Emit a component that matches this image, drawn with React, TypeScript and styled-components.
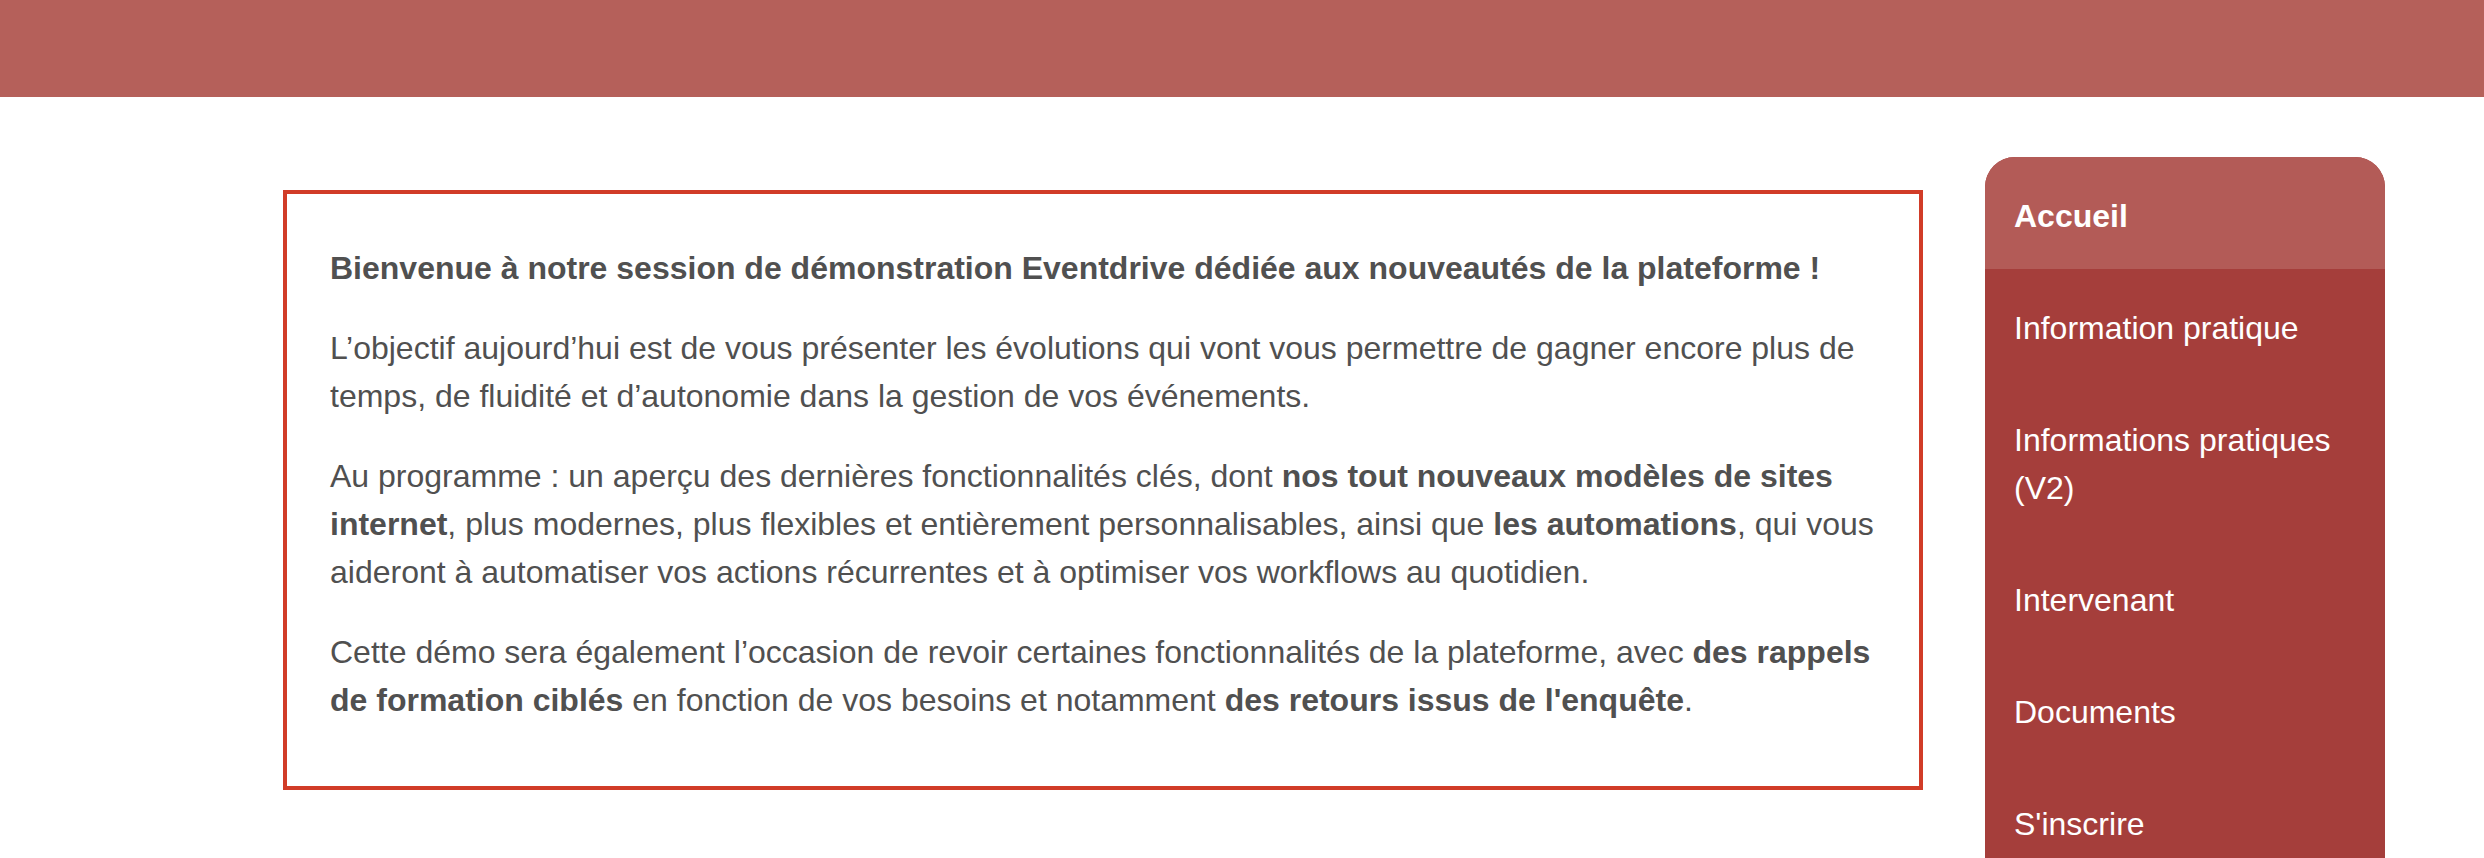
import React from "react";
import styled, { createGlobalStyle } from "styled-components";

const GlobalStyle = createGlobalStyle`
  html, body {
    margin: 0;
    padding: 0;
    background: #ffffff;
  }
  body {
    font-family: "Liberation Sans", Arial, Helvetica, sans-serif;
    -webkit-font-smoothing: antialiased;
  }
`;

const TopBar = styled.header`
  height: 97px;
  background: #b5605a;
`;

const Main = styled.main`
  display: flex;
  align-items: flex-start;
  gap: 62px;
  padding: 60px 0 0 283px;
`;

const Card = styled.section`
  box-sizing: border-box;
  width: 1640px;
  margin-top: 33px;
  border: 4px solid #d13c28;
  padding: 50px 25px 62px 43px;
  color: #505050;
  font-size: 32px;
  line-height: 48px;
`;

const Paragraph = styled.p`
  margin: 0 0 32px;
  &:last-child {
    margin-bottom: 0;
  }
`;

const Strong = styled.strong`
  font-weight: 700;
`;

const Sidebar = styled.nav`
  width: 400px;
  flex-shrink: 0;
  border-radius: 30px 30px 0 0;
  overflow: hidden;
  background: #a53e3b;
`;

const NavItem = styled.a<{ $active?: boolean }>`
  display: block;
  padding: 35px 30px 29px 29px;
  font-size: 32px;
  line-height: 48px;
  color: #ffffff;
  text-decoration: none;
  font-weight: ${(p) => (p.$active ? 700 : 400)};
  background: ${(p) => (p.$active ? "#b35b57" : "#a53e3b")};
`;

const navLinks = [
  { label: "Accueil", active: true },
  { label: "Information pratique" },
  { label: "Informations pratiques (V2)" },
  { label: "Intervenant" },
  { label: "Documents" },
  { label: "S'inscrire" },
];

export default function App() {
  return (
    <>
      <GlobalStyle />
      <TopBar />
      <Main>
        <Card>
          <Paragraph>
            <Strong>
              Bienvenue à notre session de démonstration Eventdrive dédiée aux
              nouveautés de la plateforme !
            </Strong>
          </Paragraph>
          <Paragraph>
            L’objectif aujourd’hui est de vous présenter les évolutions qui
            vont vous permettre de gagner encore plus de temps, de fluidité et
            d’autonomie dans la gestion de vos événements.
          </Paragraph>
          <Paragraph>
            Au programme : un aperçu des dernières fonctionnalités clés, dont{" "}
            <Strong>nos tout nouveaux modèles de sites internet</Strong>, plus
            modernes, plus flexibles et entièrement personnalisables, ainsi que{" "}
            <Strong>les automations</Strong>, qui vous aideront à automatiser
            vos actions récurrentes et à optimiser vos workflows au quotidien.
          </Paragraph>
          <Paragraph>
            Cette démo sera également l’occasion de revoir certaines
            fonctionnalités de la plateforme, avec{" "}
            <Strong>des rappels de formation ciblés</Strong> en fonction de vos
            besoins et notamment{" "}
            <Strong>des retours issus de l'enquête</Strong>.
          </Paragraph>
        </Card>
        <Sidebar>
          {navLinks.map((link) => (
            <NavItem key={link.label} href="#" $active={link.active}>
              {link.label}
            </NavItem>
          ))}
        </Sidebar>
      </Main>
    </>
  );
}
